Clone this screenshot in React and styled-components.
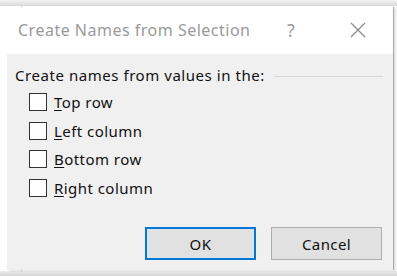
import React from 'react';
import styled, { createGlobalStyle } from 'styled-components';

const GlobalStyle = createGlobalStyle`
  html, body {
    margin: 0;
    padding: 0;
    background: #ffffff;
    overflow: hidden;
  }
`;

const Sheet = styled.div`
  width: 397px;
  height: 276px;
  box-sizing: border-box;
  padding: 7px 3px 6px 7px;
  background:
    linear-gradient(to bottom, #f4f4f4 0, #d9d9d9 6px, transparent 6px),
    linear-gradient(to top, #d6d6d6 0, #ececec 5px, transparent 5px),
    linear-gradient(to right, transparent 21px, #c8c8c8 21px, #c8c8c8 22px, transparent 22px),
    #ffffff;
  font-family: "Noto Sans", "Open Sans", sans-serif;
`;

const Dialog = styled.div`
  height: 100%;
  display: flex;
  flex-direction: column;
  background: #f0f0f0;
  border-right: 1px solid #a8a8a8;
  box-shadow: 2px 1px 2px rgba(0, 0, 0, 0.12);
`;

const TitleBar = styled.div`
  height: 45px;
  display: flex;
  align-items: center;
  background: #ffffff;
  padding: 0 0 2px 11px;
`;

const Title = styled.div`
  flex: 1;
  font-size: 16px;
  letter-spacing: 0.5px;
  color: #9a9a9a;
`;

const TitleButton = styled.div`
  width: ${p => p.$w}px;
  display: flex;
  justify-content: center;
  color: #9a9a9a;
  font-size: 18px;
`;

const Body = styled.div`
  flex: 1;
  display: flex;
  flex-direction: column;
  padding: 11px 10px 10px 8px;
`;

const GroupHeader = styled.div`
  display: flex;
  align-items: center;
  gap: 9px;
  font-size: 15px;
  letter-spacing: 0.55px;
  color: #111111;
`;

const Rule = styled.div`
  flex: 1;
  height: 1px;
  background: #d5d5d5;
  margin-top: 2px;
`;

const Options = styled.div`
  display: flex;
  flex-direction: column;
  gap: 10.5px;
  padding: 8px 0 0 14px;
`;

const Option = styled.label`
  display: flex;
  align-items: center;
  gap: 7px;
  font-size: 15px;
  letter-spacing: 0.45px;
  color: #111111;
  height: 18px;
`;

const Box = styled.span`
  width: 16px;
  height: 16px;
  border: 1px solid #333333;
  background: #ffffff;
`;

const Key = styled.span`
  text-decoration: underline;
  text-underline-offset: 2px;
`;

const Footer = styled.div`
  margin-top: auto;
  display: flex;
  justify-content: flex-end;
  gap: 15px;
  padding-right: 1px;
`;

const Button = styled.button`
  width: 111px;
  height: 33px;
  box-sizing: border-box;
  background: #e1e1e1;
  border: ${p => (p.$default ? '2px solid #0078d7' : '1px solid #adadad')};
  font-family: inherit;
  font-size: 15px;
  letter-spacing: 0.4px;
  color: #111111;
  padding: 0;
`;

const options = [
  ['T', 'op row'],
  ['L', 'eft column'],
  ['B', 'ottom row'],
  ['R', 'ight column'],
];

export default function App() {
  return (
    <>
      <GlobalStyle />
      <Sheet>
        <Dialog>
          <TitleBar>
            <Title>Create Names from Selection</Title>
            <TitleButton $w={64}>?</TitleButton>
            <TitleButton $w={70}>
              <svg width="16" height="16" viewBox="0 0 16 16">
                <path d="M1 1 L15 15 M15 1 L1 15" stroke="#8a8a8a" strokeWidth="1.2" fill="none" />
              </svg>
            </TitleButton>
          </TitleBar>
          <Body>
            <GroupHeader>
              Create names from values in the:
              <Rule />
            </GroupHeader>
            <Options>
              {options.map(([k, rest]) => (
                <Option key={k}>
                  <Box />
                  <span><Key>{k}</Key>{rest}</span>
                </Option>
              ))}
            </Options>
            <Footer>
              <Button $default>OK</Button>
              <Button>Cancel</Button>
            </Footer>
          </Body>
        </Dialog>
      </Sheet>
    </>
  );
}
